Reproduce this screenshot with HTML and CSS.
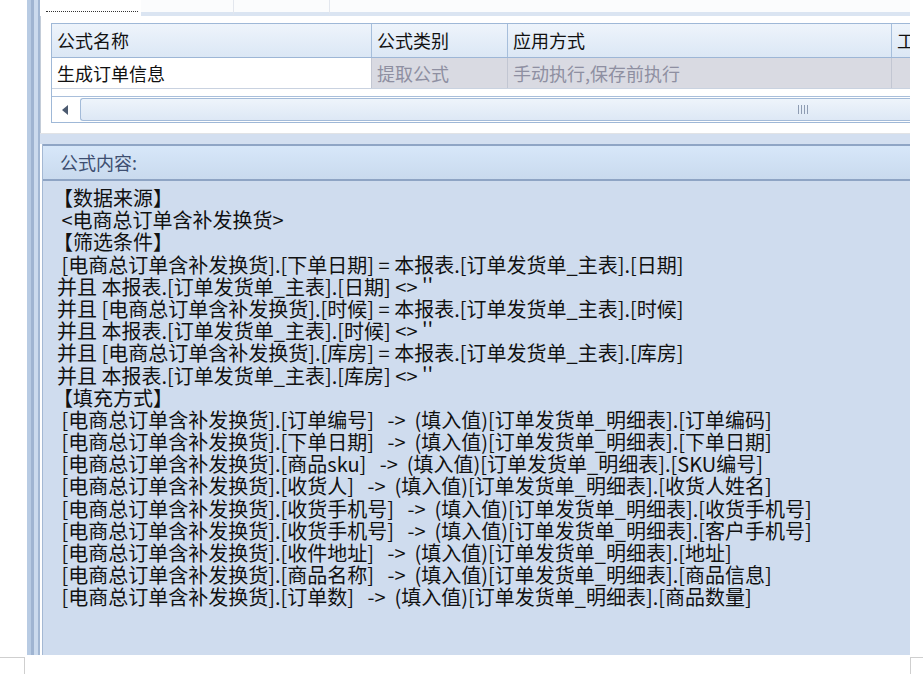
FILE: index.html
```html
<!DOCTYPE html>
<html lang="zh-CN">
<head>
  <meta charset="UTF-8">
  <title>公式设置</title>
  <link rel="stylesheet" href="styles.css">
</head>
<body>
  <div class="screen">
    <div class="frame">
      <div class="rail"></div>
      <div class="main">
        <!-- 选项卡 -->
        <div class="tabs">
          <div class="tab active"><span class="focus"></span></div>
          <div class="tab w93"></div>
          <div class="tab w96"></div>
          <div class="tab rest"></div>
        </div>

        <!-- 公式列表 -->
        <div class="tabpage">
          <div class="grid">
            <div class="grid-row head">
              <div class="cell">公式名称</div>
              <div class="cell">公式类别</div>
              <div class="cell">应用方式</div>
              <div class="cell">工作表</div>
            </div>
            <div class="grid-row data">
              <div class="cell">生成订单信息</div>
              <div class="cell ro">提取公式</div>
              <div class="cell ro">手动执行,保存前执行</div>
              <div class="cell ro"></div>
            </div>
            <div class="grid-space"></div>
            <div class="hscroll">
              <div class="arrow-btn"><span class="arrow"></span></div>
              <div class="thumb"><span class="grip"></span></div>
            </div>
          </div>
        </div>

        <div class="split"></div>

        <!-- 公式内容 -->
        <div class="formula">
          <div class="formula-head">公式内容:</div>
          <div class="formula-body">
            <div class="ln sect">【数据来源】</div>
            <div class="ln"> &lt;电商总订单含补发换货&gt;</div>
            <div class="ln sect">【筛选条件】</div>
            <div class="ln"> [电商总订单含补发换货].[下单日期] = 本报表.[订单发货单_主表].[日期]</div>
            <div class="ln">并且 本报表.[订单发货单_主表].[日期] &lt;&gt; ''</div>
            <div class="ln">并且 [电商总订单含补发换货].[时候] = 本报表.[订单发货单_主表].[时候]</div>
            <div class="ln">并且 本报表.[订单发货单_主表].[时候] &lt;&gt; ''</div>
            <div class="ln">并且 [电商总订单含补发换货].[库房] = 本报表.[订单发货单_主表].[库房]</div>
            <div class="ln">并且 本报表.[订单发货单_主表].[库房] &lt;&gt; ''</div>
            <div class="ln sect">【填充方式】</div>
            <div class="ln"> [电商总订单含补发换货].[订单编号]   -&gt;  (填入值)[订单发货单_明细表].[订单编码]</div>
            <div class="ln"> [电商总订单含补发换货].[下单日期]   -&gt;  (填入值)[订单发货单_明细表].[下单日期]</div>
            <div class="ln"> [电商总订单含补发换货].[商品sku]   -&gt;  (填入值)[订单发货单_明细表].[SKU编号]</div>
            <div class="ln"> [电商总订单含补发换货].[收货人]   -&gt;  (填入值)[订单发货单_明细表].[收货人姓名]</div>
            <div class="ln"> [电商总订单含补发换货].[收货手机号]   -&gt;  (填入值)[订单发货单_明细表].[收货手机号]</div>
            <div class="ln"> [电商总订单含补发换货].[收货手机号]   -&gt;  (填入值)[订单发货单_明细表].[客户手机号]</div>
            <div class="ln"> [电商总订单含补发换货].[收件地址]   -&gt;  (填入值)[订单发货单_明细表].[地址]</div>
            <div class="ln"> [电商总订单含补发换货].[商品名称]   -&gt;  (填入值)[订单发货单_明细表].[商品信息]</div>
            <div class="ln"> [电商总订单含补发换货].[订单数]   -&gt;  (填入值)[订单发货单_明细表].[商品数量]</div>
          </div>
        </div>
      </div>
    </div>

    <div class="foot">
      <span class="corner left"></span>
      <span class="corner right"></span>
    </div>
  </div>
</body>
</html>
```

FILE: styles.css
```css
* {
  margin: 0;
  padding: 0;
  box-sizing: border-box;
}

body {
  font-family: "Noto Sans CJK SC", "Microsoft YaHei", sans-serif;
  background-color: #fff;
  color: #111;
}

.screen {
  width: 923px;
  height: 674px;
  overflow: hidden;
}

.frame {
  display: flex;
  margin-left: 27px;
  width: 883px;
  height: 655px;
}

/* 左侧停靠条 */
.rail {
  width: 13px;
  flex-shrink: 0;
  background: linear-gradient(to right,
    #b8cbe3 0, #b8cbe3 4px,
    #9fb4d1 4px, #9fb4d1 7px,
    #cbdaed 7px, #cbdaed 11px,
    #a2b7d3 11px, #a2b7d3 13px);
}

.main {
  flex: 1;
  display: flex;
  flex-direction: column;
  min-width: 0;
}

/* 选项卡 */
.tabs {
  height: 16px;
  display: flex;
  flex-shrink: 0;
  background: #fff;
}

.tab {
  height: 16px;
  border-right: 1px solid #e3e7ee;
  border-bottom: 4px solid #dbe5f2;
  background: #fbfcfd;
}

.tab.active {
  width: 101px;
  border-bottom: none;
  border-right: none;
  background: #fff;
  padding: 11px 0 0 6px;
}

.tab .focus {
  display: block;
  width: 92px;
  border-top: 1px dotted #333;
}

.tab.w93 { width: 93px; }
.tab.w96 { width: 96px; }
.tab.rest { flex: 1; border-right: none; }

/* 列表页 */
.tabpage {
  height: 117px;
  flex-shrink: 0;
  background: #fff;
  border-left: 1px solid #c3ccd8;
  padding: 7px 0 0 10px;
}

.grid {
  height: 100px;
  border: 1px solid #9fb8d7;
  border-right: none;
  overflow: hidden;
  font-size: 18px;
}

.grid-row {
  display: grid;
  grid-template-columns: 320px 136px 384px 120px;
}

.grid-row .cell {
  padding-left: 5px;
  white-space: nowrap;
  overflow: hidden;
}

.head {
  height: 34px;
  line-height: 32px;
  background: linear-gradient(#eef4fb, #dbe7f5);
  border-bottom: 1px solid #9db6d6;
}

.head .cell {
  border-right: 1px solid #a6bedb;
  color: #111;
}

.data {
  height: 31px;
  line-height: 30px;
  border-bottom: 1px solid #c9d2e0;
}

.data .cell {
  border-right: 1px solid #c2c6d2;
}

.data .cell.ro {
  background: #d9dae2;
  color: #8e8fa1;
}

.grid-space {
  height: 7px;
}

/* 水平滚动条 */
.hscroll {
  height: 27px;
  display: flex;
  border-top: 1px solid #a9bfdb;
  border-bottom: 1px solid #a9bfdb;
  background: #fff;
}

.arrow-btn {
  width: 28px;
  display: flex;
  align-items: center;
  padding-left: 10px;
}

.arrow {
  width: 0;
  height: 0;
  border-top: 5px solid transparent;
  border-bottom: 5px solid transparent;
  border-right: 6px solid #4c5a70;
}

.thumb {
  flex: 1;
  margin: 1px 0;
  border: 1px solid #a3bbd9;
  border-right: none;
  border-radius: 3px 0 0 3px;
  background: linear-gradient(#eef4fb, #dde8f5);
  display: flex;
  align-items: center;
  padding-left: 717px;
}

.grip {
  width: 11px;
  height: 9px;
  background: repeating-linear-gradient(to right, #8e9cb2 0, #8e9cb2 1px, transparent 1px, transparent 3px);
}

/* 分隔条 */
.split {
  height: 11px;
  flex-shrink: 0;
  border-top: 1px solid #e1e3e6;
  background: #d3dff0;
}

/* 公式内容 */
.formula {
  flex: 1;
  display: flex;
  flex-direction: column;
  margin-left: 2px;
  border-left: 1px solid #a4b8d3;
  background: #cfdcee;
}

.formula-head {
  height: 37px;
  flex-shrink: 0;
  border-top: 2px solid #8fa5c5;
  border-bottom: 2px solid #8ea4c4;
  background: linear-gradient(#d7e7f9, #c9daee);
  padding-left: 17px;
  line-height: 32px;
  font-size: 18px;
  color: #3d4e70;
}

.formula-body {
  flex: 1;
  padding: 6px 0 0 14px;
  font-size: 20px;
  color: #111;
  overflow: hidden;
}

.formula-body .ln {
  height: 22.2px;
  line-height: 22.2px;
  white-space: pre;
}

/* 段落标题的方括号字形自带左侧留白，往回收一点 */
.formula-body .ln.sect {
  margin-left: -4px;
}

/* 页角标记 */
.foot {
  display: flex;
  margin-top: 2px;
  height: 17px;
}

.corner {
  height: 17px;
  border-top: 1px solid #cfcfcf;
}

.corner.left {
  width: 25px;
  border-right: 1px solid #cfcfcf;
}

.corner.right {
  width: 13px;
  margin-left: auto;
  border-left: 1px solid #cfcfcf;
}
```
